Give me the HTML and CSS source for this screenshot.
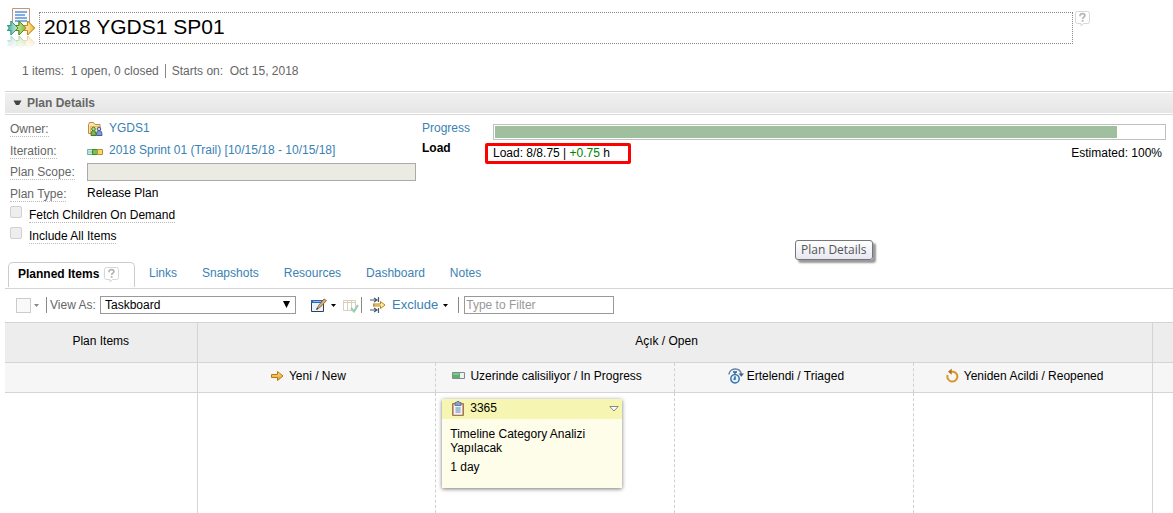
FILE: index.html
```html
<!DOCTYPE html>
<html lang="en">
<head>
<meta charset="utf-8">
<title>2018 YGDS1 SP01</title>
<link rel="stylesheet" href="styles.css">
</head>
<body>
<svg class="defs" width="0" height="0" aria-hidden="true">
  <defs>
    <linearGradient id="teal" x1="0" x2="1"><stop offset="0" stop-color="#4fb09c"/><stop offset="1" stop-color="#c9ece0"/></linearGradient>
    <linearGradient id="green" x1="0" x2="1"><stop offset="0" stop-color="#d2e9a0"/><stop offset="1" stop-color="#83b940"/></linearGradient>
    <linearGradient id="gold" x1="0" x2="1"><stop offset="0" stop-color="#fff3c4"/><stop offset="1" stop-color="#f0b93c"/></linearGradient>
    <linearGradient id="orange" x1="0" y1="0" x2="0" y2="1"><stop offset="0" stop-color="#ffe39a"/><stop offset="1" stop-color="#e09a1c"/></linearGradient>
    <linearGradient id="fade" x1="0" y1="0" x2="0" y2="1"><stop offset="0" stop-color="#fff" stop-opacity=".55"/><stop offset="1" stop-color="#fff"/></linearGradient>
    <symbol id="help" viewBox="0 0 15 16"><path d="M2.500.5h10a2 2 0 0 1 2 2v8a2 2 0 0 1-2 2H8.500L6 15v-2.500H2.500a2 2 0 0 1-2-2v-8a2 2 0 0 1 2-2z" fill="#fff" stroke="#d6d6d6"/><path d="M5 5.200V4.500C5 3.300 6 2.700 7.400 2.700s2.500.7 2.500 1.800c0 1.600-2.300 1.700-2.300 3.500M7.600 9v1.700" fill="none" stroke="#b4b4b4" stroke-width="1.700"/></symbol>
    <g id="arrows" stroke-width="1">
      <path d="M.5 5.500H4v-4.500l7 7-7 7V10.500H.5L2.500 8z" fill="url(#teal)" stroke="#369c87"/>
      <path d="M8.500 5.500H12v-4.500l7 7-7 7V10.500H8.500L11 8z" fill="url(#green)" stroke="#4c8a20"/>
      <path d="M17 5.500H20.500v-4.500l7 7-7 7V10.500H17L19 8z" fill="url(#gold)" stroke="#c38a18"/>
    </g>
  </defs>
</svg>

<header class="header">
  <svg class="plan-icon" width="28" height="42" viewBox="0 0 28 42" aria-hidden="true">
    <path d="M5.500 1.500h17v20h-17z" fill="#f6f9fd" stroke="#c29a72"/>
    <path d="M8 5h12M8 8h10M8 11h12M8 14h12" stroke="#5b93d2" stroke-width="1.500"/>
    <use href="#arrows" y="13"/>
    <use href="#arrows" transform="translate(0 44) scale(1 -1)"/>
    <path d="M0 29h28v13H0z" fill="url(#fade)"/>
    <use href="#arrows" y="13"/>
  </svg>
  <input class="title" type="text" aria-label="Plan name" value="2018 YGDS1 SP01">
  <svg class="title-help" width="15" height="16" aria-hidden="true"><use href="#help"/></svg>
</header>

<div class="summary">
  <span>1 items:&nbsp; 1 open, 0 closed</span>
  <span class="starts">Starts on:&nbsp; Oct 15, 2018</span>
</div>

<main class="main">
  <h2 class="section"><svg width="9" height="6" viewBox="0 0 9 6" aria-hidden="true"><path d="M.5.500h8L6 5H3z" fill="#444"/></svg>Plan Details</h2>

  <section class="details">
    <div class="fields">
      <div class="field"><span class="label"><span>Owner:</span></span>
        <svg width="16" height="16" viewBox="0 0 16 16" aria-hidden="true">
          <path d="M1.500 11.500v-9l1-2h4l1.500 2h5v9z" fill="#fbe6a8" stroke="#c58a3c"/><path d="M3.500 11V4.500h10" fill="none" stroke="#e6b765"/>
          <path d="M4 13.500c0-3.500.8-5 2.500-5S9 10 9 13.500z" fill="#7fb558" stroke="#447a28"/><circle cx="6.500" cy="7" r="1.800" fill="#b4d89a" stroke="#447a28"/>
          <path d="M9.500 13.500c0-3.500.8-5 2.700-5s2.800 1.500 2.800 5z" fill="#7f9bd0" stroke="#425f9c"/><circle cx="12" cy="7" r="1.800" fill="#c2d0ee" stroke="#425f9c"/>
        </svg>
        <a href="#">YGDS1</a></div>
      <div class="field"><span class="label"><span>Iteration:</span></span>
        <svg width="16" height="16" viewBox="0 0 16 16" aria-hidden="true"><path d="M.5 5.500h5v5h-5z" fill="#c6eadf" stroke="#6fb09f"/><path d="M5.500 5.500h5v5h-5z" fill="#7dbd51" stroke="#3f8a2c"/><path d="M10.500 5.500h5v5h-5z" fill="#f7d66c" stroke="#b5953a"/><path d="M0 8h5" stroke="#8ccbb9"/></svg>
        <a href="#">2018 Sprint 01 (Trail) [10/15/18 - 10/15/18]</a></div>
      <div class="field"><label class="label" for="scope"><span>Plan Scope:</span></label><input class="scope" id="scope" type="text" disabled></div>
      <div class="field"><span class="label"><span>Plan Type:</span></span><span class="value">Release Plan</span></div>
      <div class="check"><input type="checkbox" id="fetch" disabled><label for="fetch">Fetch Children On Demand</label></div>
      <div class="check"><input type="checkbox" id="all" disabled><label for="all">Include All Items</label></div>
    </div>
    <div class="status">
      <a class="status-label" href="#">Progress</a>
      <div class="bar"><div class="fill" style="width:93%"></div></div>
      <strong class="status-label">Load</strong>
      <div class="load"><span class="callout">Load: 8/8.75 | <span class="plus">+0.75</span> h</span><span class="estimated">Estimated: 100%</span></div>
    </div>
  </section>

  <nav class="tabs">
    <a class="active" href="#">Planned Items<svg width="15" height="16" aria-hidden="true"><use href="#help"/></svg></a>
    <a href="#">Links</a><a href="#">Snapshots</a><a href="#">Resources</a><a href="#">Dashboard</a><a href="#">Notes</a>
  </nav>

  <div class="toolbar">
    <button class="swatch" type="button" aria-label="Color"><span class="box"></span><svg width="5" height="3" viewBox="0 0 5 3"><path d="M0 0h5L2.500 3z" fill="#888"/></svg></button>
    <i class="sep"></i>
    <label class="view-label" for="view">View As:</label>
    <span class="select"><select id="view"><option>Taskboard</option></select><svg width="7" height="7" viewBox="0 0 7 7" aria-hidden="true"><path d="M0 0h7L3.500 7z"/></svg></span>
    <button class="edit" type="button" aria-label="Edit view">
      <svg width="16" height="15" viewBox="0 0 16 15"><path d="M.5 2.500h12v11H.5z" fill="#eaf3fb" stroke="#343f55"/><path d="M0 2h13v3H0z" fill="#2d63b5"/><path d="M2 3.500h8" stroke="#8fb7ec"/><path d="M6 11l1.500-3.500L13 1l2.500 1.500L9.500 9z" fill="#dcae76" stroke="#805b3a" stroke-width=".8"/><path d="M5 12l1-2.500L7.500 11z" fill="#333"/></svg>
      <svg class="caret" width="5" height="3" viewBox="0 0 5 3"><path d="M0 0h5L2.500 3z"/></svg>
    </button>
    <button class="columns" type="button" aria-label="Columns"><svg width="16" height="15" viewBox="0 0 16 15"><path d="M.5 2.500h12v10H.5zM.5 4.500h12M4.500 3v9M8.500 3v9" fill="none" stroke="#d8cfbd"/><path d="M8 10l3 3.500 4-6.500" fill="none" stroke="#9bcbb4" stroke-width="2"/></svg></button>
    <i class="sep"></i>
    <button class="exclude" type="button">
      <svg width="16" height="16" viewBox="0 0 16 16" aria-hidden="true"><path d="M0 3h6M0 13h6M4 1l3 2-3 2M4 11l3 2-3 2M8.500 0v5M8.500 11v5" fill="none" stroke="#4b596f" stroke-width="1.200"/><path d="M3 7h7.500V4.500L15 8l-4.500 3.500V9H3l1.500-1z" fill="#ffeaa6" stroke="#b5881c"/></svg>
      <span>Exclude</span>
      <svg class="caret" width="5" height="3" viewBox="0 0 5 3"><path d="M0 0h5L2.500 3z"/></svg>
    </button>
    <i class="sep"></i>
    <input class="filter" type="text" placeholder="Type to Filter" aria-label="Type to Filter">
  </div>

  <table class="board">
    <colgroup><col class="c-items"><col><col><col><col><col class="c-end"></colgroup>
    <thead>
      <tr class="groups"><th>Plan Items</th><th class="group-open" colspan="4">Açık / Open</th><th></th></tr>
      <tr class="states">
        <th></th>
        <th><span class="state"><svg width="13" height="16" viewBox="0 0 13 16" aria-hidden="true"><path d="M.5 6.500h6V3.500l5.500 4.500-5.500 4.500V9.500h-6z" fill="url(#orange)" stroke="#b97716"/></svg>Yeni / New</span></th>
        <th><span class="state"><svg width="13" height="16" viewBox="0 0 13 16" aria-hidden="true"><path d="M.5 4.500h12v6H.5z" fill="#eef3ef" stroke="#7c8b96"/><path d="M1 5h7v5H1z" fill="#5fb068"/><path d="M1 6h6" stroke="#a7dba8"/></svg>Uzerinde calisiliyor / In Progress</span></th>
        <th><span class="state triaged"><svg width="16" height="16" viewBox="0 0 16 16" aria-hidden="true"><path d="M1 6.500C1.500-.3 12-1.500 13.500 6.500" fill="none" stroke="#6782a6" stroke-width="1.500"/><path d="M10.500 5.500h5.500L13.300 8.700z" fill="#3d5f93"/><path d="M5 4h4M7 4v2" stroke="#23639b" stroke-width="1.300"/><circle cx="7" cy="10.800" r="4.200" fill="#e3f2fb" stroke="#2a72a8" stroke-width="1.400"/><path d="M7 8.200v3h-1.500" fill="none" stroke="#1b4f80" stroke-width="1.300"/></svg>Ertelendi / Triaged</span></th>
        <th><span class="state"><svg width="13" height="16" viewBox="0 0 13 16" aria-hidden="true"><path d="M5 3.700h2.500A5 5 0 1 1 1.600 7" fill="none" stroke="#d99528" stroke-width="2"/><path d="M2 3.700L5.700.5v6.300z" fill="#b96f1c"/></svg>Yeniden Acildi / Reopened</span></th>
        <th></th>
      </tr>
    </thead>
    <tbody>
      <tr class="lane">
        <td></td><td></td>
        <td>
          <article class="card">
            <div class="card-head">
              <svg width="14" height="16" viewBox="0 0 14 16" aria-hidden="true"><path d="M1.500 2.500h11v12h-11z" fill="#d6a77a" stroke="#9c7a5b"/><path d="M3 4h8v9.500H3z" fill="#edf3fb"/><path d="M4.500 7h5M4.500 9h5M4.500 11h5" stroke="#6480b0"/><path d="M4 1.500h1.500L6 .5h2l.5 1H10v3H4z" fill="#8b9ec3" stroke="#536890" stroke-width=".8"/></svg>
              <span>3365</span>
              <button class="menu" type="button" aria-label="Menu"><svg width="10" height="6" viewBox="0 0 10 6"><path d="M.8.500h8.400L5 5z" fill="#fff" stroke="#888"/></svg></button>
            </div>
            <div class="card-body"><p>Timeline Category Analizi Yapılacak</p><p>1 day</p></div>
          </article>
        </td>
        <td></td><td></td><td></td>
      </tr>
    </tbody>
  </table>
</main>
<div class="tooltip" role="tooltip">Plan Details</div>
</body>
</html>
```
FILE: styles.css
```css
* { box-sizing: border-box; }
html, body { height: 100%; }
body {
  margin: 0;
  background: #fff;
  color: #000;
  font: 12px/14px "Liberation Sans", Arial, sans-serif;
  display: flex;
  flex-direction: column;
  overflow: hidden;
}
a { color: #3a82b4; text-decoration: none; }
button { border: 0; padding: 0; background: none; font: inherit; color: inherit; display: flex; align-items: center; }
input, select { font: inherit; }
svg { display: block; flex: none; }
.defs { position: absolute; }

.header { display: flex; align-items: flex-start; padding: 7px 83px 0 7px; height: 56px; }
.plan-icon { margin-right: 4px; }
.title {
  flex: 1;
  min-width: 0;
  height: 32px;
  margin: 5px 2px 0 0;
  padding: 0 4px 3px;
  border: 1px dotted #888;
  font-size: 21px;
  outline: 0;
}
.title-help { margin-top: 4px; }

.summary { display: flex; height: 35px; padding: 8px 22px 0; color: #666; }
.starts { margin-left: 6px; padding-left: 6px; border-left: 1px solid #888; height: 14px; }

.main { margin-left: 5px; flex: 1; display: flex; flex-direction: column; }
.section {
  display: flex;
  align-items: center;
  gap: 5px;
  margin: 0;
  height: 24px;
  padding: 1px 0 0 8px;
  border-top: 1px solid #d4d4d4;
  border-bottom: 1px solid #d9d9d9;
  background: linear-gradient(#f1f1f1, #e5e5e5);
  box-shadow: inset 0 1px #fff, inset 0 -1px #fff;
  color: #666;
  font-size: 12px;
}

.details { display: flex; padding-top: 7px; height: 147px; }
.fields { width: 417px; padding-left: 5px; }
.field { display: flex; align-items: flex-start; height: 22px; }
.field:nth-child(even) { height: 21px; }
.label { width: 77px; color: #666; }
.label span { display: inline-block; height: 15px; border-bottom: 1px dotted #bbb; }
.field a { margin-left: 6px; }
.scope { width: 329px; height: 18px; margin-top: -2px; border: 1px solid #aaa; background: #ebebe4; }
.field .value, .field a { margin-top: -1px; }
.check { display: flex; align-items: flex-start; height: 21px; }
.check input {
  appearance: none;
  width: 12px;
  height: 12px;
  margin: -2px 7px 0 0;
  border: 1px solid #d0d0d0;
  border-radius: 2px;
  background: #eee;
}
.check label { height: 15px; border-bottom: 1px dotted #bbb; }

.status {
  flex: 1;
  display: grid;
  grid-template-columns: 71px 1fr;
  grid-template-rows: 20px 20px;
  padding-right: 7px;
  align-items: start;
}
.status-label { margin-top: -1px; }
.bar { height: 16px; margin-top: 2px; padding: 1px; border: 1px solid #c0c0c0; }
.fill { height: 100%; background: #9fbf9f; }
.load { display: flex; justify-content: space-between; }
.callout { margin: 1px 0 0 -8px; width: 146px; padding: 0 5px; height: 21px; line-height: 15px; border: 3px solid #f00; border-radius: 2px; white-space: nowrap; }
.estimated { padding: 4px 4px 0 0; }
.plus { color: #008000; }

.tabs { display: flex; height: 27px; border-bottom: 1px solid #d4d4d4; padding-left: 3px; }
.tabs a { margin-right: 25px; padding-top: 4px; }
.tabs .active {
  display: flex;
  gap: 5px;
  width: 127px;
  height: 25px;
  margin-right: 14px;
  padding-left: 9px;
  border: 1px solid #ccc;
  border-bottom: 0;
  border-radius: 5px 5px 0 0;
  color: #000;
  font-weight: bold;
}

.toolbar { display: flex; align-items: center; height: 33px; padding-left: 11px; }
.swatch { gap: 3px; }
.box { width: 15px; height: 15px; border: 1px solid #ccc; background: #f9f9f9; }
.sep { width: 1px; height: 16px; background: #888; }
.swatch + .sep { margin: 0 3px 0 7px; }
.view-label { width: 50px; color: #666; }
.select { position: relative; width: 196px; }
.select select { appearance: none; width: 100%; height: 18px; padding: 0 4px; border: 1px solid #999; border-radius: 0; background: #fff; display: block; color: #000; }
.select svg { position: absolute; right: 6px; top: 5px; pointer-events: none; }
.edit { margin-left: 15px; gap: 4px; }
.columns { margin: 0 2px 0 7px; }
.exclude { margin: 0 10px 0 8px; color: #3a82b4; font-size: 13px; }
.exclude span { margin: 0 5px 0 6px; }
.caret { fill: #000; }
.filter { width: 150px; height: 18px; margin-left: 5px; padding: 0 1px; border: 1px solid #999; }
.filter::placeholder { color: #999; }

.board { width: 100%; flex: 1; table-layout: fixed; border-collapse: collapse; }
.c-items { width: 192px; }
.c-end { width: 21px; }
.board th { padding: 0; font-weight: normal; border-top: 1px solid #d4d4d4; }
.board th, .board td { border-left: 1px solid #d4d4d4; }
.board th:first-child, .board td:first-child { border-left: 0; }
.groups { height: 40px; background: #ededed; }
.groups th { padding-bottom: 3px; }
.groups .group-open { padding-right: 16px; }
.states { height: 30px; background: #f6f6f6; }
.states th { padding: 0 16px 2px 0; }
.board .states th:nth-child(n+3):nth-child(-n+5),
.board td:nth-child(n+3):nth-child(-n+5) { border-left: 1px dashed #d0d0d0; }
.lane td { height: 121px; padding: 6px; vertical-align: top; border-top: 1px solid #d4d4d4; }
.state { display: flex; align-items: center; justify-content: center; gap: 5px; white-space: nowrap; }
.triaged { gap: 3px; }

.card { width: 180px; height: 89px; background: #fdfdea; box-shadow: 0 1px 4px #777; }
.card-head { display: flex; align-items: center; height: 20px; padding: 0 3px 0 9px; background: #f6f6b2; }
.card-head span { margin: 0 auto 2px 5px; }
.card-body { padding: 8px 8px 0; }
.card-body p { margin: 0 0 5px; }

.tooltip {
  position: absolute;
  left: 795px;
  top: 240px;
  padding: 2px 5px;
  border: 1px solid #767676;
  border-radius: 3px;
  background: linear-gradient(#fff, #e6e7f2);
  box-shadow: 3px 3px 2px #999;
  color: #555;
  font-family: "Open Sans", sans-serif;
  line-height: 14px;
}
```
